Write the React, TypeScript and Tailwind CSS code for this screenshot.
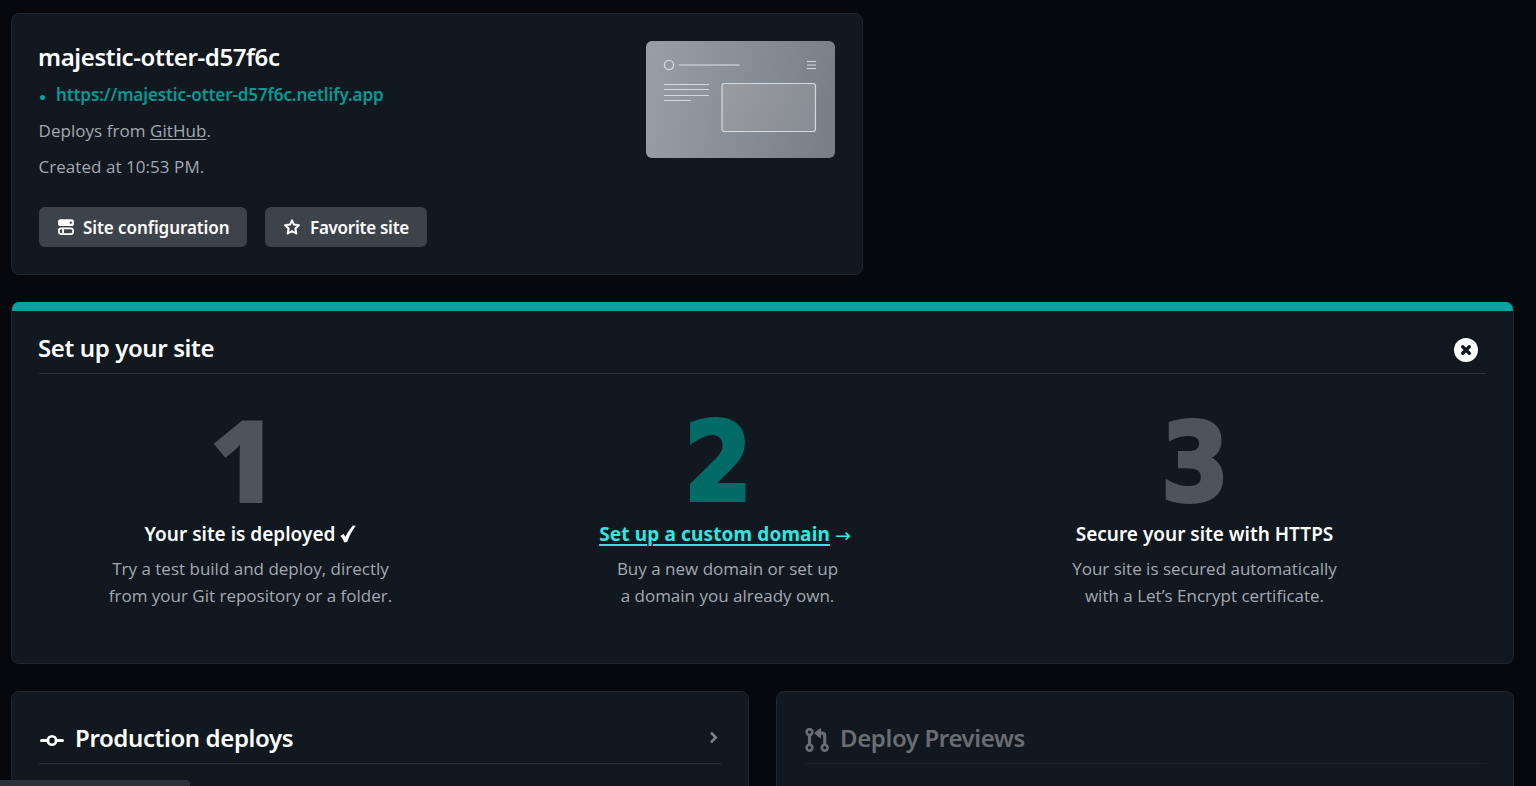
import type { ReactNode } from "react";

function ConfigIcon() {
  return (
    <svg className="h-4 w-4 shrink-0" viewBox="0 0 16 16" fill="none">
      <rect x="0" y="0.2" width="16" height="6.8" rx="2.6" fill="#fff" />
      <circle cx="12.8" cy="3.6" r="1.2" fill="#3d434b" />
      <rect x="0.9" y="9.3" width="14.2" height="5.8" rx="2.4" stroke="#fff" strokeWidth="1.8" />
      <path d="M5 10v4.5" stroke="#fff" strokeWidth="1.8" />
    </svg>
  );
}

function StarIcon() {
  return (
    <svg className="h-4 w-4 shrink-0" viewBox="0 0 16 16" fill="none">
      <path
        d="M8 1.3l2 4.3 4.9.6-3.5 3.3.9 5L8 12.1l-4.3 2.4.9-5L1.1 6.2 6 5.6z"
        stroke="#fff"
        strokeWidth="2"
        strokeLinejoin="round"
      />
    </svg>
  );
}

function CommitIcon() {
  return (
    <svg className="mt-1 ml-[1px] h-6 w-6" viewBox="0 0 24 24" fill="none" stroke="#fff">
      <path d="M1.5 12.5h6.500M16 12.5h6.500" strokeWidth="3" strokeLinecap="round" />
      <circle cx="12" cy="12.5" r="4.2" strokeWidth="2.6" />
    </svg>
  );
}

function PullRequestIcon() {
  return (
    <svg className="mt-1 h-6 w-[25px]" viewBox="0 0 25 24" fill="none" stroke="currentColor" strokeWidth="2.6">
      <circle cx="5.5" cy="4" r="2.9" />
      <circle cx="5.5" cy="19.7" r="2.9" />
      <circle cx="20.7" cy="19.7" r="2.9" />
      <path d="M5.5 7v9.500M20.700 16.500V7.700a2.500 2.500 0 0 0-2.500-2.500h-4" strokeWidth="3.2" />
      <path d="M11.300 5.200L16.300 1v8.400z" fill="currentColor" strokeWidth="1.6" strokeLinejoin="round" />
    </svg>
  );
}

function CheckMark() {
  return (
    <svg className="mb-[1px] ml-[5px] h-[18px] w-4" viewBox="0 0 16 18" fill="none">
      <path
        d="M.2 10.900L3.600 9c.9 1 1.300 1.900 1.700 3.100C7.300 7.700 9.800 3.800 12.900.400l2.900.400C12 5.800 9.200 10.900 7.300 16.800L4.200 17.400C3.400 14.600 2.100 12.500.200 10.900z"
        fill="#fff"
      />
    </svg>
  );
}

function Thumbnail() {
  return (
    <svg className="h-[117px] w-[189px]" viewBox="0 0 189 117" fill="none">
      <defs>
        <linearGradient id="thumb" x1="0" y1="0" x2="189" y2="30" gradientUnits="userSpaceOnUse">
          <stop offset="0" stopColor="#989fa6" />
          <stop offset="1" stopColor="#798088" />
        </linearGradient>
        <linearGradient id="panel" x1="0" y1="0" x2="1" y2="0.3">
          <stop offset="0" stopColor="#999da2" />
          <stop offset="1" stopColor="#8a8f95" />
        </linearGradient>
      </defs>
      <rect width="189" height="117" rx="6" fill="url(#thumb)" />
      <g stroke="#d5d9dd">
        <circle cx="23" cy="24" r="4.6" strokeWidth="1.3" />
        <path d="M33 24h60.500" strokeWidth="1.6" stroke="#c3c8cd" />
        <path d="M161 20.500h9M161 24h9M161 27.500h9" />
        <path d="M18 43.500h45M18 48.500h45M18 54.500h45M18 59.500h27" />
        <rect x="76" y="42.5" width="93.5" height="48" rx="2.5" fill="url(#panel)" strokeWidth="1.2" />
      </g>
    </svg>
  );
}

const semi = "font-['Noto_Sans',sans-serif] font-semibold";
const heading = "font-['Noto_Sans',sans-serif] text-2xl leading-8 font-semibold tracking-[-0.38px]";

function Button({ icon, className, children }: { icon: ReactNode; className: string; children: ReactNode }) {
  return (
    <button className={`flex h-10 items-center rounded-md bg-[#3d434b] pl-[19px] text-[17px] text-white ${semi} ${className}`}>
      {icon}
      {children}
    </button>
  );
}

const digitStyles = {
  done: "mr-[15px] text-[116px] font-extrabold text-[#4e545d]",
  current:
    "relative top-[5px] mr-[19px] font-['DejaVu_Sans_Condensed','DejaVu_Sans',sans-serif] text-[108px] font-bold text-[#026b68] [-webkit-text-stroke:4px_#026b68]",
  todo: "relative top-[5px] mr-[19px] font-['DejaVu_Sans_Condensed','DejaVu_Sans',sans-serif] text-[108px] font-bold text-[#4e545d] [-webkit-text-stroke:4px_#4e545d]",
};

function Step({
  digit,
  state,
  title,
  lines,
}: {
  digit: string;
  state: keyof typeof digitStyles;
  title: ReactNode;
  lines: string[];
}) {
  return (
    <li className="flex flex-col items-center whitespace-nowrap">
      <span className={`h-[100px] leading-[100px] ${digitStyles[state]}`}>{digit}</span>
      <h3 className={`mt-[13px] flex h-[27px] items-center text-[19px] leading-[27px] text-white ${semi}`}>{title}</h3>
      <p className="mt-[7px] text-center">
        {lines[0]}
        <br />
        {lines[1]}
      </p>
    </li>
  );
}

const card = "rounded-lg border border-[#1f262e] bg-[#11181f]";

export default function App() {
  return (
    <div className="relative h-[786px] overflow-hidden bg-[#05090d] pt-[13px] pr-[22px] pl-[11px] font-['Open_Sans',sans-serif] text-[17px] leading-[27px] text-[#a3a9b2]">
      <section className={`flex h-[262px] w-[852px] justify-between p-[27px] pl-[26px] ${card}`}>
        <div>
          <h1 className={`text-white ${heading}`}>majestic-otter-d57f6c</h1>
          <div className={`mt-2 flex items-center tracking-[-0.1px] text-[#049a96] ${semi}`}>
            <span className="mt-[5px] ml-[2px] h-[5px] w-[5px] rounded-full bg-[#05a5a1]" />
            <a className="ml-[11px]">https://majestic-otter-d57f6c.netlify.app</a>
          </div>
          <p className="mt-[9px] ml-[0.5px] tracking-[0.05px]">
            Deploys from <a className="underline decoration-1 underline-offset-2">GitHub</a>.
          </p>
          <p className="mt-[9px] ml-[0.5px] tracking-[0.05px]">Created at 10:53 PM.</p>
          <div className="mt-[27px] ml-[1px] flex gap-[18px]">
            <Button icon={<ConfigIcon />} className="w-[208px] gap-[9px] tracking-[-0.08px]">
              Site configuration
            </Button>
            <Button icon={<StarIcon />} className="w-[162px] gap-[10px] tracking-[-0.26px]">
              Favorite site
            </Button>
          </div>
        </div>
        <Thumbnail />
      </section>

      <section className="mt-[27px] h-[362px] overflow-hidden rounded-lg border border-t-0 border-[#1f262e] bg-[#11181f]">
        <div className="h-[9px] bg-[#05a39f]" />
        <header className="mr-[27px] ml-[27px] flex h-[63px] items-start justify-between border-b border-[#2a3139] pt-[21px] pr-2">
          <h2 className={`-ml-[1px] text-white ${heading}`}>Set up your site</h2>
          <button className="mt-[6px] flex h-6 w-6 items-center justify-center rounded-full bg-white">
            <svg className="h-3 w-3" viewBox="0 0 12 12" stroke="#11181f" strokeWidth="3.4" strokeLinecap="round">
              <path d="M2.700 2.700l6.600 6.600M9.300 2.700L2.700 9.300" />
            </svg>
          </button>
        </header>
        <ol className="mt-[34px] grid grid-cols-[477px_477px_477px]">
          <Step
            digit="1"
            state="done"
            title={
              <>
                Your site is deployed
                <CheckMark />
              </>
            }
            lines={["Try a test build and deploy, directly", "from your Git repository or a folder."]}
          />
          <Step
            digit="2"
            state="current"
            title={
              <span className="mr-[5px] flex items-center text-[#32e6e2]">
                <a className="font-bold tracking-[0.14px] underline decoration-2 underline-offset-[3px]">
                  Set up a custom domain
                </a>
                <span className="mt-[2px] ml-[5px] font-['DejaVu_Sans',sans-serif] text-[19px] font-normal">→</span>
              </span>
            }
            lines={["Buy a new domain or set up", "a domain you already own."]}
          />
          <Step
            digit="3"
            state="todo"
            title="Secure your site with HTTPS"
            lines={["Your site is secured automatically", "with a Let’s Encrypt certificate."]}
          />
        </ol>
      </section>

      <div className="mt-[27px] grid grid-cols-2 gap-[27px]">
        <section className={`h-[140px] px-[27px] pt-[30px] ${card}`}>
          <header className="flex h-[42px] items-start border-b border-[#2a3139]">
            <div className="flex h-8 items-center gap-[11px]">
              <CommitIcon />
              <h2 className={`text-white ${heading}`}>Production deploys</h2>
            </div>
            <svg
              className="mt-[9px] mr-[2px] ml-auto h-3 w-2.5"
              viewBox="0 0 10 12"
              fill="none"
              stroke="#7b828b"
              strokeWidth="2.6"
            >
              <path d="M2 1.700L6.800 6.500 2 11.300" />
            </svg>
          </header>
        </section>
        <section className={`h-[140px] px-[27px] pt-[30px] text-[#6a6d72] ${card}`}>
          <header className="flex h-[42px] items-start border-b border-[#1b2028]">
            <div className="flex h-8 items-center gap-[11px]">
              <PullRequestIcon />
              <h2 className={heading}>Deploy Previews</h2>
            </div>
          </header>
        </section>
      </div>

      <div className="absolute bottom-0 left-0 h-[6px] w-[190px] rounded-tr bg-[#29313c]" />
    </div>
  );
}
